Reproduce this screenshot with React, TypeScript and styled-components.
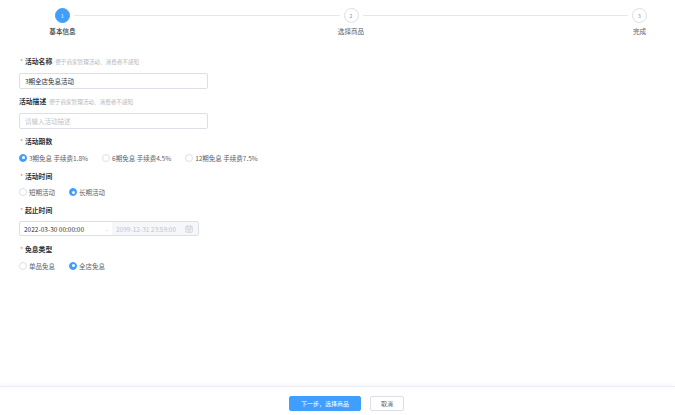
import React from 'react';
import styled, { createGlobalStyle } from 'styled-components';

const GlobalStyle = createGlobalStyle`
  html, body {
    margin: 0;
    padding: 0;
    background: #fff;
  }
  body {
    font-family: "Noto Sans CJK SC", "Noto Sans", sans-serif;
    color: #303133;
  }
  * {
    box-sizing: border-box;
  }
`;

const steps = ['基本信息', '选择商品', '完成'];

const periodOptions = ['3期免息 手续费1.8%', '6期免息 手续费4.5%', '12期免息 手续费7.5%'];
const timeOptions = ['短期活动', '长期活动'];
const typeOptions = ['单品免息', '全店免息'];

const Steps: React.FC<{ active: number }> = ({ active }) => (
  <StyledSteps>
    {steps.map((title, i) => (
      <React.Fragment key={title}>
        <StyledStep>
          <StyledStepCircle $active={i === active}>{i + 1}</StyledStepCircle>
          <StyledStepTitle $active={i === active}>{title}</StyledStepTitle>
        </StyledStep>
        {i < steps.length - 1 && <StyledStepLine />}
      </React.Fragment>
    ))}
  </StyledSteps>
);

interface RadioGroupProps {
  options: string[];
  value: number;
}

const RadioGroup: React.FC<RadioGroupProps> = ({ options, value }) => (
  <StyledRadioGroup>
    {options.map((opt, i) => (
      <StyledRadio key={opt}>
        <StyledRadioDot $checked={i === value} />
        <span>{opt}</span>
      </StyledRadio>
    ))}
  </StyledRadioGroup>
);

const CalendarIcon: React.FC = () => (
  <svg width="8" height="8" viewBox="0 0 16 16" fill="none" stroke="#c0c4cc" strokeWidth="1.3">
    <rect x="1.5" y="2.5" width="13" height="12" rx="1" />
    <line x1="1.5" y1="6" x2="14.5" y2="6" />
    <line x1="5" y1="1" x2="5" y2="4" />
    <line x1="11" y1="1" x2="11" y2="4" />
    <line x1="4.5" y1="9" x2="11.5" y2="9" />
    <line x1="4.5" y1="11.8" x2="11.5" y2="11.8" />
  </svg>
);

interface FieldProps {
  label: string;
  hint?: string;
  required?: boolean;
  children: React.ReactNode;
}

const Field: React.FC<FieldProps> = ({ label, hint, required, children }) => (
  <StyledField>
    <StyledLabel>
      {required && <StyledStar>*</StyledStar>}
      {label}
      {hint && <StyledHint>{hint}</StyledHint>}
    </StyledLabel>
    {children}
  </StyledField>
);

const App: React.FC = () => {
  return (
    <StyledPage>
      <GlobalStyle />
      <Steps active={0} />
      <StyledForm>
        <Field label="活动名称" hint="便于商家管理活动、消费者不感知" required>
          <StyledInput defaultValue="3期全店免息活动" />
        </Field>
        <Field label="活动描述" hint="便于商家管理活动、消费者不感知">
          <StyledInput placeholder="请输入活动描述" />
        </Field>
        <Field label="活动期数" required>
          <RadioGroup options={periodOptions} value={0} />
        </Field>
        <Field label="活动时间" required>
          <RadioGroup options={timeOptions} value={1} />
        </Field>
        <Field label="起止时间" required>
          <StyledDateRange>
            <StyledDateStart>2022-03-30 00:00:00</StyledDateStart>
            <StyledDateSep>-</StyledDateSep>
            <StyledDateEnd>
              <span>2099-12-31 23:59:00</span>
              <CalendarIcon />
            </StyledDateEnd>
          </StyledDateRange>
        </Field>
        <Field label="免息类型" required>
          <RadioGroup options={typeOptions} value={1} />
        </Field>
      </StyledForm>
      <StyledFooter>
        <StyledButton $primary>下一步，选择商品</StyledButton>
        <StyledButton>取消</StyledButton>
      </StyledFooter>
    </StyledPage>
  );
};

const StyledPage = styled.div`
  display: flex;
  flex-direction: column;
  height: 100vh;
  overflow: hidden;
`;

const StyledSteps = styled.div`
  display: flex;
  align-items: flex-start;
  padding: 8px 28px 0 55px;
`;

const StyledStep = styled.div`
  display: flex;
  flex-direction: column;
  align-items: center;
  width: 15px;
`;

const StyledStepCircle = styled.div<{ $active?: boolean }>`
  width: 15px;
  height: 15px;
  border-radius: 50%;
  display: flex;
  align-items: center;
  justify-content: center;
  font-size: 5px;
  line-height: 1;
  color: ${(p) => (p.$active ? '#fff' : '#909399')};
  background: ${(p) => (p.$active ? '#409eff' : '#fff')};
  border: 1px solid ${(p) => (p.$active ? '#409eff' : '#dcdfe6')};
`;

const StyledStepTitle = styled.div<{ $active?: boolean }>`
  margin-top: 3px;
  white-space: nowrap;
  font-size: 6.6px;
  line-height: 10px;
  font-weight: ${(p) => (p.$active ? 500 : 400)};
  color: ${(p) => (p.$active ? '#303133' : '#606266')};
`;

const StyledStepLine = styled.div`
  flex: 1;
  height: 1px;
  margin: 7px 4px 0;
  background: #e4e7ed;
`;

const StyledForm = styled.div`
  flex: 1;
  padding: 20px 0 0 19px;
`;

const StyledField = styled.div`
  margin-bottom: 7.6px;
`;

const StyledLabel = styled.div`
  display: flex;
  align-items: baseline;
  height: 10px;
  line-height: 10px;
  margin-bottom: 6.6px;
  font-size: 6.8px;
  font-weight: 600;
  color: #303133;
`;

const StyledStar = styled.span`
  width: 6px;
  color: #f56c6c;
  font-weight: 400;
  padding-left: 1px;
`;

const StyledHint = styled.span`
  margin-left: 3px;
  font-size: 5.6px;
  font-weight: 400;
  color: #b4b7bd;
`;

const StyledInput = styled.input`
  display: block;
  width: 189px;
  height: 16px;
  padding: 0 5px;
  border: 1px solid #dcdfe6;
  border-radius: 2px;
  outline: none;
  font-family: inherit;
  font-size: 6.5px;
  color: #303133;
  &::placeholder {
    color: #c0c4cc;
  }
`;

const StyledRadioGroup = styled.div`
  display: flex;
  align-items: center;
  height: 10px;
`;

const StyledRadio = styled.label`
  display: flex;
  align-items: center;
  margin-right: 14px;
  font-size: 6.5px;
  color: #606266;
  white-space: nowrap;
`;

const StyledRadioDot = styled.span<{ $checked?: boolean }>`
  width: 8px;
  height: 8px;
  margin-right: 2px;
  border-radius: 50%;
  border: 1px solid ${(p) => (p.$checked ? '#409eff' : '#dcdfe6')};
  background: ${(p) => (p.$checked ? '#409eff' : '#fff')};
  display: flex;
  align-items: center;
  justify-content: center;
  &::after {
    content: '';
    width: 3px;
    height: 3px;
    border-radius: 50%;
    background: #fff;
    display: ${(p) => (p.$checked ? 'block' : 'none')};
  }
`;

const StyledDateRange = styled.div`
  display: flex;
  align-items: stretch;
  width: 180px;
  height: 15px;
  border: 1px solid #dcdfe6;
  border-radius: 2px;
  overflow: hidden;
  font-size: 6.5px;
`;

const StyledDateStart = styled.div`
  display: flex;
  align-items: center;
  width: 86px;
  padding-left: 4px;
  color: #303133;
`;

const StyledDateSep = styled.div`
  display: flex;
  align-items: center;
  width: 6px;
  color: #c0c4cc;
`;

const StyledDateEnd = styled.div`
  flex: 1;
  display: flex;
  align-items: center;
  justify-content: space-between;
  padding: 0 5px 0 4px;
  background: #f5f7fa;
  color: #c0c4cc;
`;

const StyledFooter = styled.div`
  display: flex;
  justify-content: center;
  gap: 9px;
  height: 29px;
  padding: 9px 0 0 18px;
  border-top: 1px solid #ebeef5;
  box-shadow: 0 -2px 4px rgba(0, 0, 0, 0.03);
`;

const StyledButton = styled.button<{ $primary?: boolean }>`
  height: 15px;
  padding: 0 ${(p) => (p.$primary ? 11 : 10)}px;
  border-radius: 2px;
  border: 1px solid ${(p) => (p.$primary ? '#409eff' : '#dcdfe6')};
  background: ${(p) => (p.$primary ? '#409eff' : '#fff')};
  color: ${(p) => (p.$primary ? '#fff' : '#606266')};
  font-family: inherit;
  font-size: 6px;
  line-height: 1;
  cursor: pointer;
`;

export default App;
